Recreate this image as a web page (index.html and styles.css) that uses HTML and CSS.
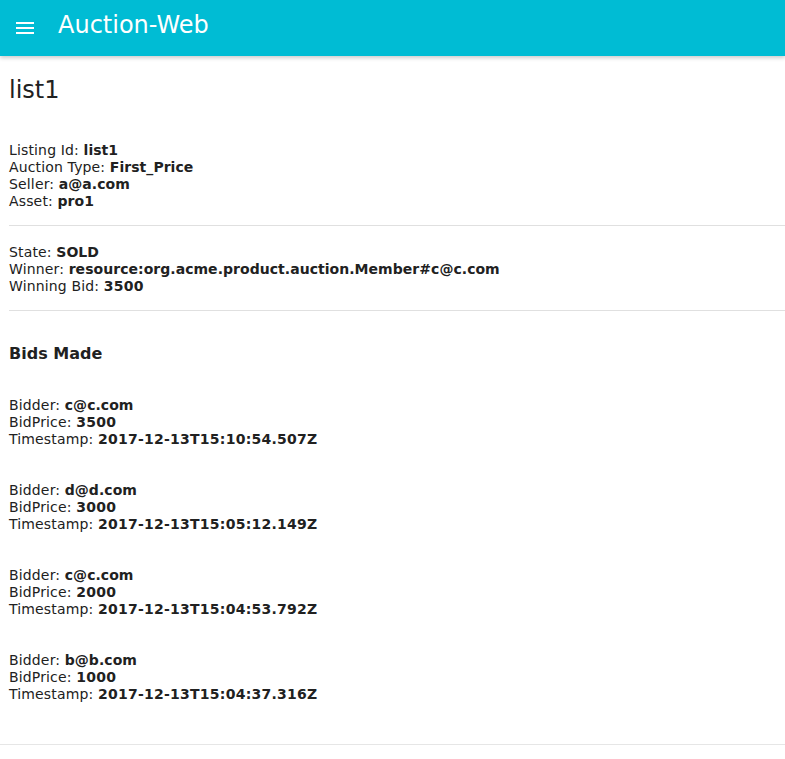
FILE: index.html
```html
<!DOCTYPE html>
<html>
<head>
<meta charset="utf-8">
<link rel="stylesheet" href="styles.css">
</head>
<body>
<header class="toolbar">
  <svg class="menu-icon" width="24" height="24" viewBox="0 0 24 24"><path fill="#fff" d="M3 18h18v-2H3v2zm0-5h18v-2H3v2zm0-7v2h18V6H3z"/></svg>
  <span class="app-title">Auction-Web</span>
</header>
<main class="card">
  <h1 class="listing-title">list1</h1>
  <section class="info first">
    <div>Listing Id: <b>list1</b></div>
    <div>Auction Type: <b>First_Price</b></div>
    <div>Seller: <b>a@a.com</b></div>
    <div>Asset: <b>pro1</b></div>
  </section>
  <hr class="divider">
  <section class="info second">
    <div>State: <b>SOLD</b></div>
    <div>Winner: <b>resource:org.acme.product.auction.Member#c@c.com</b></div>
    <div>Winning Bid: <b class="num">3500</b></div>
  </section>
  <hr class="divider">
  <h2 class="bids-title">Bids Made</h2>
  <div class="bids">
    <section class="bid">
      <div>Bidder: <b>c@c.com</b></div>
      <div>BidPrice: <b class="num">3500</b></div>
      <div>Timestamp: <b class="num">2017-12-13T15:10:54.507Z</b></div>
    </section>
    <section class="bid">
      <div>Bidder: <b>d@d.com</b></div>
      <div>BidPrice: <b class="num">3000</b></div>
      <div>Timestamp: <b class="num">2017-12-13T15:05:12.149Z</b></div>
    </section>
    <section class="bid">
      <div>Bidder: <b>c@c.com</b></div>
      <div>BidPrice: <b class="num">2000</b></div>
      <div>Timestamp: <b class="num">2017-12-13T15:04:53.792Z</b></div>
    </section>
    <section class="bid">
      <div>Bidder: <b>b@b.com</b></div>
      <div>BidPrice: <b class="num">1000</b></div>
      <div>Timestamp: <b class="num">2017-12-13T15:04:37.316Z</b></div>
    </section>
  </div>
</main>
</body>
</html>
```

FILE: styles.css
```css
html, body {
  margin: 0;
  padding: 0;
  background: #fff;
}
body {
  font-family: "DejaVu Sans", sans-serif;
  color: #212121;
}
.toolbar {
  position: relative;
  z-index: 2;
  height: 56px;
  background: #00bcd4;
  display: flex;
  align-items: center;
  padding-left: 13px;
  box-shadow: 0 2px 4px rgba(0,0,0,0.2);
}
.menu-icon {
  display: block;
  margin-right: 21px;
}
.app-title {
  color: #fff;
  font-size: 24px;
  line-height: 28px;
  margin-top: -7px;
}
.card {
  display: block;
  position: relative;
  background: #fff;
  padding: 20px 0 41px 9px;
  border-bottom: 1px solid #e6e6e6;
  box-shadow: 0 2px 3px rgba(0,0,0,0.18);
}
.listing-title {
  margin: 0;
  font-size: 24px;
  font-weight: normal;
  line-height: 28px;
}
.info, .bid {
  font-size: 14px;
  line-height: 17px;
  letter-spacing: 0.15px;
}
.info.first {
  margin-top: 38px;
}
.info b, .bid b {
  font-weight: bold;
  letter-spacing: 0.04px;
}
.info b.num, .bid b.num {
  letter-spacing: 0.25px;
}
.divider {
  border: 0;
  border-top: 1px solid #e0e0e0;
  margin: 15px 0 18px;
  height: 0;
}
.bids-title {
  margin: 33px 0 0;
  font-size: 16px;
  font-weight: bold;
  line-height: 19px;
}
.bids {
  display: flex;
  flex-direction: column;
  gap: 34px;
  margin-top: 34px;
}
```
